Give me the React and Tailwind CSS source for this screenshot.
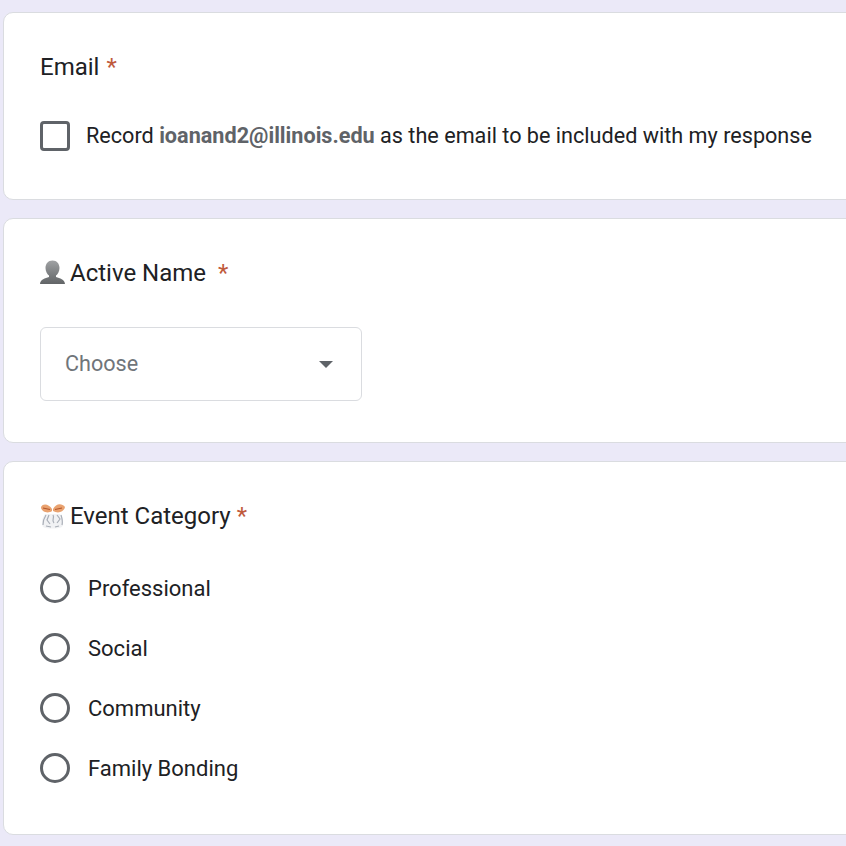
import React from 'react';

function Star({ className = '' }) {
    return <span className={`text-[#bf5a3c] ${className}`}>*</span>;
}

function BustIcon() {
    return (
        <svg width="26" height="26" viewBox="0 0 26 26" className="shrink-0">
            <defs>
                <linearGradient id="bust" x1="0" y1="0" x2="0" y2="1">
                    <stop offset="0" stopColor="#a0a2a4" />
                    <stop offset="0.55" stopColor="#7c7f81" />
                    <stop offset="1" stopColor="#626567" />
                </linearGradient>
            </defs>
            <path d="M12.5 0.5 C17 0.5 19.5 4 19.5 8 C19.5 11.5 17.5 14.5 16 15.5 L16 17 C20 18.5 24.5 19 25 24 L0 24 C0.5 19 5 18.5 9 17 L9 15.5 C7.5 14.5 5.5 11.5 5.5 8 C5.5 4 8 0.5 12.5 0.5 Z" fill="url(#bust)" />
        </svg>
    );
}

function BowIcon() {
    return (
        <svg width="26" height="26" viewBox="0 0 26 26" className="shrink-0">
            <path d="M5 11 C2 15 1 20 3 24 C7 26 17 26 22 24 C24 20 23 15 20 11 Z" fill="#f1f2f4" />
            <path d="M12 6 C9 1 3 0 1 4 C1 9 8 11 12 8 Z" fill="#e9a26f" />
            <path d="M13 6 C16 0 22 0 25 4 C24 9 18 11 13 8 Z" fill="#e9a26f" />
            <path d="M3 5 L10 6.5 M15 6.5 L22 5" stroke="#b5562c" strokeWidth="1.2" fill="none" />
            <path d="M6 12 C4 15 3 18 3 22 M9 12 L7 17 L10 21 M13 12 C15 15 11 17 14 20 M17 12 L20 16 L17 20 M21 12 C22 15 23 18 22 22 M6 23 L11 24 M15 24 L19 23" stroke="#a9aeb7" strokeWidth="1.2" fill="none" />
        </svg>
    );
}

function Card({ children, className = '' }) {
    return (
        <section className={`w-[900px] rounded-[10px] border border-[#dadce0] bg-white pl-9 ${className}`}>
            {children}
        </section>
    );
}

function Radio({ label }) {
    return (
        <label className="flex h-[60px] items-center gap-[18px]">
            <span className="h-[30px] w-[30px] shrink-0 rounded-full border-[3px] border-[#5f6368]" />
            <span className="text-[22px] text-[#202124]">{label}</span>
        </label>
    );
}

export default function App() {
    return (
        <div className="flex h-[846px] w-[846px] flex-col gap-[18px] overflow-hidden bg-[#ebe9f8] pl-[3px] pt-3 font-['Roboto',sans-serif]">
            <Card className="h-[188px] pt-9">
                <h2 className="flex h-9 items-center text-[24px] leading-9 text-[#202124]">
                    Email<Star className="ml-[7px]" />
                </h2>
                <div className="mt-9 flex h-[30px] items-center">
                    <span className="h-[30px] w-[30px] shrink-0 rounded-[4px] border-[3px] border-[#5f6368]" />
                    <p className="ml-4 whitespace-nowrap text-[21.63px] text-[#202124]">
                        Record <b className="font-bold text-[#5f6368]">ioanand2@illinois.edu</b> as the email to be included with my response
                    </p>
                </div>
            </Card>
            <Card className="h-[225px] pt-9">
                <h2 className="flex h-9 items-center text-[24px] leading-9 text-[#202124]">
                    <BustIcon />
                    <span className="ml-[4px]">Active Name</span>
                    <Star className="ml-[12px]" />
                </h2>
                <div className="mt-9 flex h-[74px] w-[322px] items-center justify-between rounded-[6px] border border-[#dadce0] pl-6 pr-[28px]">
                    <span className="text-[21.6px] text-[#70757a]">Choose</span>
                    <span className="h-0 w-0 border-x-[7px] border-t-[7px] border-x-transparent border-t-[#5f6368]" />
                </div>
            </Card>
            <Card className="h-[374px] pt-9">
                <h2 className="flex h-9 items-center text-[24px] leading-9 text-[#202124]">
                    <BowIcon />
                    <span className="ml-[4px]">Event Category</span>
                    <Star className="ml-[6px]" />
                </h2>
                <div className="mt-6 flex flex-col">
                    <Radio label="Professional" />
                    <Radio label="Social" />
                    <Radio label="Community" />
                    <Radio label="Family Bonding" />
                </div>
            </Card>
        </div>
    );
}
